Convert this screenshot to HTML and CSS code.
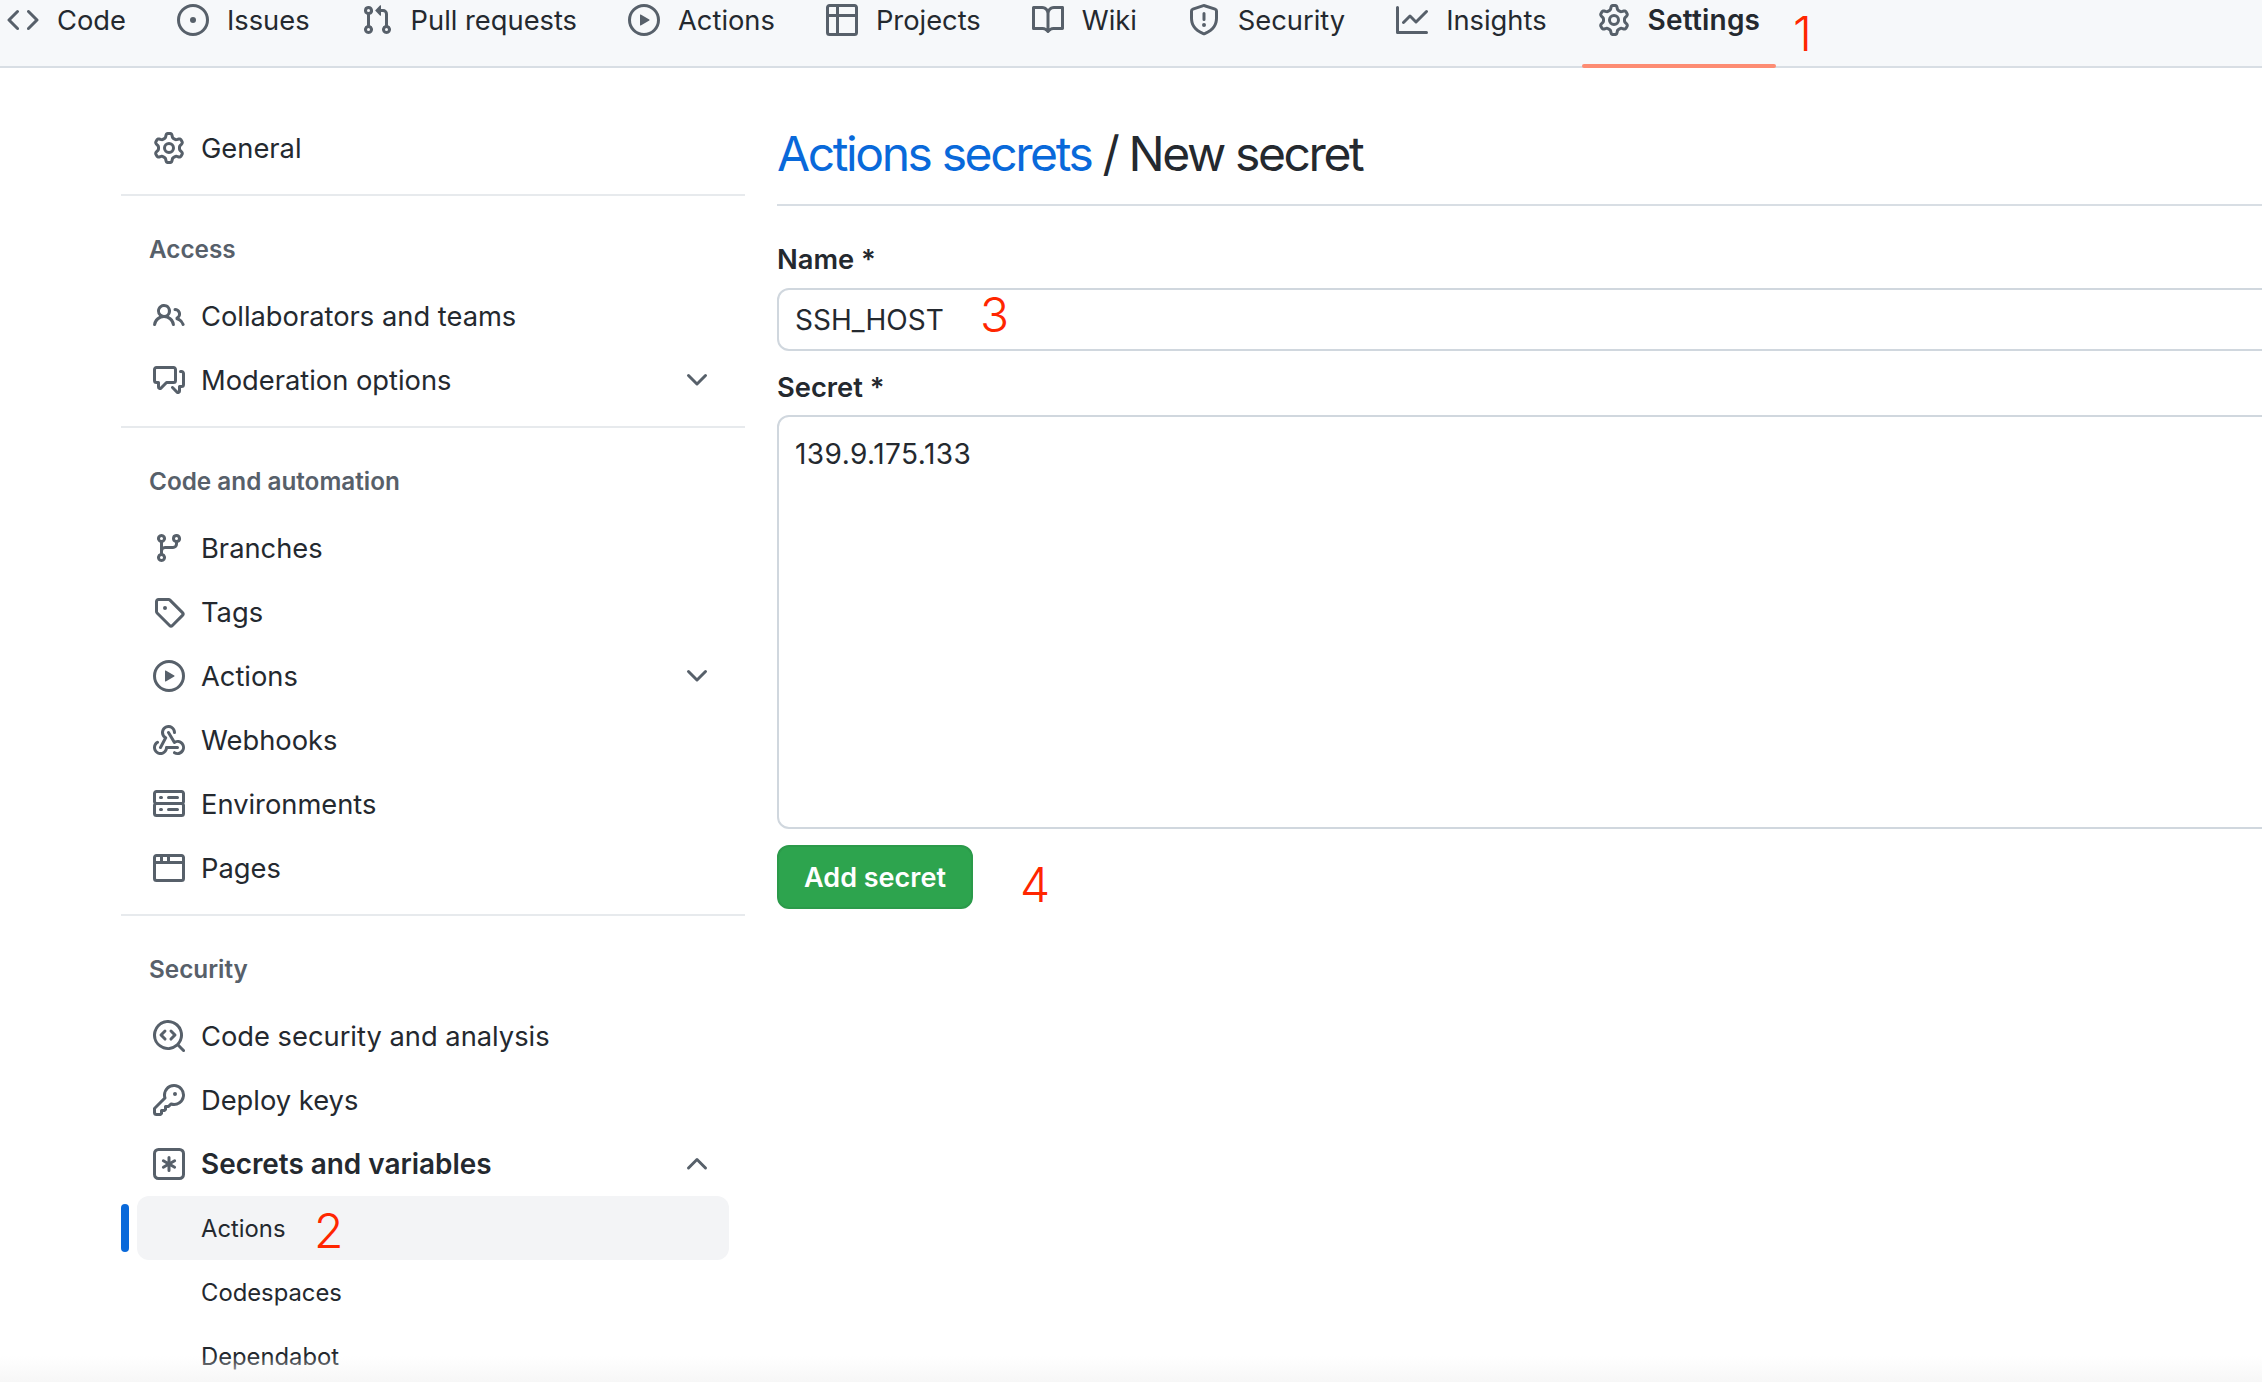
FILE: index.html
```html
<!DOCTYPE html>
<html lang="en">
<head>
<meta charset="utf-8">
<title>Actions secrets / New secret</title>
<link rel="stylesheet" href="styles.css">
</head>
<body>
<svg class="defs" xmlns="http://www.w3.org/2000/svg">
<symbol id="code" viewBox="0 0 16 16"><path d="m11.28 3.22 4.25 4.25a.75.75 0 0 1 0 1.06l-4.25 4.25a.749.749 0 0 1-1.275-.326.749.749 0 0 1 .215-.734L13.94 8l-3.72-3.72a.749.749 0 0 1 .326-1.275.749.749 0 0 1 .734.215Zm-6.56 0a.751.751 0 0 1 1.042.018.751.751 0 0 1 .018 1.042L2.06 8l3.72 3.72a.749.749 0 0 1-.326 1.275.749.749 0 0 1-.734-.215L.47 8.53a.75.75 0 0 1 0-1.06Z"/></symbol>
<symbol id="issue" viewBox="0 0 16 16"><path d="M8 9.5a1.5 1.5 0 1 0 0-3 1.5 1.5 0 0 0 0 3Z"/><path d="M8 0a8 8 0 1 1 0 16A8 8 0 0 1 8 0ZM1.5 8a6.5 6.5 0 1 0 13 0 6.5 6.5 0 0 0-13 0Z"/></symbol>
<symbol id="pr" viewBox="0 0 16 16"><path d="M1.5 3.25a2.25 2.25 0 1 1 3 2.122v5.256a2.251 2.251 0 1 1-1.5 0V5.372A2.25 2.25 0 0 1 1.5 3.25Zm5.677-.177L9.573.677A.25.25 0 0 1 10 .854V2.5h1A2.5 2.5 0 0 1 13.5 5v5.628a2.251 2.251 0 1 1-1.5 0V5a1 1 0 0 0-1-1h-1v1.646a.25.25 0 0 1-.427.177L7.177 3.427a.25.25 0 0 1 0-.354ZM3.75 2.5a.75.75 0 1 0 0 1.5.75.75 0 0 0 0-1.5Zm0 9.5a.75.75 0 1 0 0 1.5.75.75 0 0 0 0-1.5Zm8.25.75a.75.75 0 1 0 1.5 0 .75.75 0 0 0-1.5 0Z"/></symbol>
<symbol id="play" viewBox="0 0 16 16"><path d="M8 0a8 8 0 1 1 0 16A8 8 0 0 1 8 0ZM1.5 8a6.5 6.5 0 1 0 13 0 6.5 6.5 0 0 0-13 0Zm4.879-2.773 4.264 2.559a.25.25 0 0 1 0 .428l-4.264 2.559A.25.25 0 0 1 6 10.559V5.442a.25.25 0 0 1 .379-.215Z"/></symbol>
<symbol id="table" viewBox="0 0 16 16"><path d="M0 1.75C0 .784.784 0 1.75 0h12.5C15.216 0 16 .784 16 1.75v12.5A1.75 1.75 0 0 1 14.25 16H1.75A1.75 1.75 0 0 1 0 14.25ZM6.5 6.5v8h7.75a.25.25 0 0 0 .25-.25V6.5Zm8-1.5V1.75a.25.25 0 0 0-.25-.25H6.5V5Zm-13 1.5v7.75c0 .138.112.25.25.25H5v-8ZM5 5V1.5H1.75a.25.25 0 0 0-.25.25V5Z"/></symbol>
<symbol id="book" viewBox="0 0 16 16"><path d="M0 1.75A.75.75 0 0 1 .75 1h4.253c1.227 0 2.317.59 3 1.501A3.743 3.743 0 0 1 11.006 1h4.245a.75.75 0 0 1 .75.75v10.5a.75.75 0 0 1-.75.75h-4.507a2.25 2.25 0 0 0-1.591.659l-.622.621a.75.75 0 0 1-1.06 0l-.622-.621A2.25 2.25 0 0 0 5.258 13H.75a.75.75 0 0 1-.75-.75Zm7.251 10.324.004-5.073-.002-2.253A2.25 2.25 0 0 0 5.003 2.5H1.5v9h3.757a3.75 3.75 0 0 1 1.994.574ZM8.755 4.75l-.004 7.322a3.752 3.752 0 0 1 1.992-.572H14.5v-9h-3.495a2.25 2.25 0 0 0-2.25 2.25Z"/></symbol>
<symbol id="shield" viewBox="0 0 16 16"><path d="M7.467.133a1.748 1.748 0 0 1 1.066 0l5.25 1.68A1.75 1.75 0 0 1 15 3.48V7c0 1.566-.32 3.182-1.303 4.682-.983 1.498-2.585 2.813-5.032 3.855a1.697 1.697 0 0 1-1.33 0c-2.447-1.042-4.049-2.357-5.032-3.855C1.32 10.182 1 8.566 1 7V3.48a1.75 1.75 0 0 1 1.217-1.667Zm.61 1.429a.25.25 0 0 0-.153 0l-5.25 1.68a.25.25 0 0 0-.174.238V7c0 1.358.275 2.666 1.057 3.86.784 1.194 2.121 2.34 4.366 3.297a.196.196 0 0 0 .154 0c2.245-.956 3.582-2.104 4.366-3.298C13.225 9.666 13.5 8.36 13.5 7V3.48a.251.251 0 0 0-.174-.237l-5.25-1.68ZM8.75 4.75v3a.75.75 0 0 1-1.5 0v-3a.75.75 0 0 1 1.5 0ZM9 10.5a1 1 0 1 1-2 0 1 1 0 0 1 2 0Z"/></symbol>
<symbol id="graph" viewBox="0 0 16 16"><path d="M1.5 1.75V13.5h13.75a.75.75 0 0 1 0 1.5H.75a.75.75 0 0 1-.75-.75V1.75a.75.75 0 0 1 1.5 0Zm14.28 2.53-5.25 5.25a.75.75 0 0 1-1.06 0L7 7.06 4.28 9.78a.751.751 0 0 1-1.042-.018.751.751 0 0 1-.018-1.042l3.25-3.25a.75.75 0 0 1 1.06 0L10 7.94l4.72-4.72a.751.751 0 0 1 1.042.018.751.751 0 0 1 .018 1.042Z"/></symbol>
<symbol id="gear" viewBox="0 0 16 16"><path d="M8 0a8.2 8.2 0 0 1 .701.031C9.444.095 9.99.645 10.16 1.29l.288 1.107c.018.066.079.158.212.224.231.114.454.243.668.386.123.082.233.09.299.071l1.103-.303c.644-.176 1.392.021 1.82.63.27.385.506.792.704 1.218.315.675.111 1.422-.364 1.891l-.814.806c-.049.048-.098.147-.088.294.016.257.016.515 0 .772-.01.147.038.246.088.294l.814.806c.475.469.679 1.216.364 1.891a7.977 7.977 0 0 1-.704 1.217c-.428.61-1.176.807-1.82.63l-1.102-.302c-.067-.019-.177-.011-.3.071a5.909 5.909 0 0 1-.668.386c-.133.066-.194.158-.211.224l-.29 1.106c-.168.646-.715 1.196-1.458 1.26a8.006 8.006 0 0 1-1.402 0c-.743-.064-1.289-.614-1.458-1.26l-.289-1.106c-.018-.066-.079-.158-.212-.224a5.738 5.738 0 0 1-.668-.386c-.123-.082-.233-.09-.299-.071l-1.103.303c-.644.176-1.392-.021-1.82-.63a8.12 8.12 0 0 1-.704-1.218c-.315-.675-.111-1.422.363-1.891l.815-.806c.05-.048.098-.147.088-.294a6.214 6.214 0 0 1 0-.772c.01-.147-.038-.246-.088-.294l-.815-.806C.635 6.045.431 5.298.746 4.623a7.92 7.92 0 0 1 .704-1.217c.428-.61 1.176-.807 1.82-.63l1.102.302c.067.019.177.011.3-.071.214-.143.437-.272.668-.386.133-.066.194-.158.211-.224l.29-1.106C6.009.645 6.556.095 7.299.03 7.53.01 7.764 0 8 0Zm-.571 1.525c-.036.003-.108.036-.137.146l-.289 1.105c-.147.561-.549.967-.998 1.189-.173.086-.34.183-.5.29-.417.278-.97.423-1.529.27l-1.103-.303c-.109-.03-.175.016-.195.045-.22.312-.412.644-.573.99-.014.031-.021.11.059.19l.815.806c.411.406.562.957.53 1.456a4.709 4.709 0 0 0 0 .582c.032.499-.119 1.05-.53 1.456l-.815.806c-.081.08-.073.159-.059.19.162.346.353.677.573.989.02.03.085.076.195.046l1.102-.303c.56-.153 1.113-.008 1.53.27.161.107.328.204.501.29.447.222.85.629.997 1.189l.289 1.105c.029.109.101.143.137.146a6.6 6.6 0 0 0 1.142 0c.036-.003.108-.036.137-.146l.289-1.105c.147-.561.549-.967.998-1.189.173-.086.34-.183.5-.29.417-.278.97-.423 1.529-.27l1.103.303c.109.029.175-.016.195-.045.22-.313.411-.644.573-.99.014-.031.021-.11-.059-.19l-.815-.806c-.411-.406-.562-.957-.53-1.456a4.709 4.709 0 0 0 0-.582c-.032-.499.119-1.05.53-1.456l.815-.806c.081-.08.073-.159.059-.19a6.464 6.464 0 0 0-.573-.989c-.02-.03-.085-.076-.195-.046l-1.102.303c-.56.153-1.113.008-1.53-.27a4.44 4.44 0 0 0-.501-.29c-.447-.222-.85-.629-.997-1.189l-.289-1.105c-.029-.11-.101-.143-.137-.146a6.6 6.6 0 0 0-1.142 0ZM11 8a3 3 0 1 1-6 0 3 3 0 0 1 6 0ZM9.5 8a1.5 1.5 0 1 0-3.001.001A1.5 1.5 0 0 0 9.5 8Z"/></symbol>
<symbol id="people" viewBox="0 0 16 16"><path d="M2 5.5a3.5 3.5 0 1 1 5.898 2.549 5.508 5.508 0 0 1 3.034 4.084.75.75 0 1 1-1.482.235 4 4 0 0 0-7.9 0 .75.75 0 0 1-1.482-.236A5.507 5.507 0 0 1 3.102 8.05 3.493 3.493 0 0 1 2 5.5ZM11 4a3.001 3.001 0 0 1 2.22 5.018 5.01 5.01 0 0 1 2.56 3.012.749.749 0 0 1-.885.954.752.752 0 0 1-.549-.514 3.507 3.507 0 0 0-2.522-2.372.75.75 0 0 1-.574-.73v-.352a.75.75 0 0 1 .416-.672A1.5 1.5 0 0 0 11 5.5.75.75 0 0 1 11 4Zm-5.5-.5a2 2 0 1 0-.001 3.999A2 2 0 0 0 5.5 3.5Z"/></symbol>
<symbol id="discuss" viewBox="0 0 16 16"><path d="M1.75 1h8.5c.966 0 1.75.784 1.75 1.75v5.5A1.75 1.75 0 0 1 10.25 10H7.061l-2.574 2.573A1.458 1.458 0 0 1 2 11.543V10h-.25A1.75 1.75 0 0 1 0 8.25v-5.5C0 1.784.784 1 1.75 1ZM1.5 2.75v5.5c0 .138.112.25.25.25h1a.75.75 0 0 1 .75.75v2.19l2.72-2.72a.749.749 0 0 1 .53-.22h3.5a.25.25 0 0 0 .25-.25v-5.5a.25.25 0 0 0-.25-.25h-8.5a.25.25 0 0 0-.25.25Zm13 2a.25.25 0 0 0-.25-.25h-.5a.75.75 0 0 1 0-1.5h.5c.966 0 1.75.784 1.75 1.75v5.5A1.75 1.75 0 0 1 14.25 12H14v1.543a1.458 1.458 0 0 1-2.487 1.03L9.22 12.28a.749.749 0 0 1 .326-1.275.749.749 0 0 1 .734.215l2.22 2.22v-2.19a.75.75 0 0 1 .75-.75h1a.25.25 0 0 0 .25-.25Z"/></symbol>
<symbol id="branch" viewBox="0 0 16 16"><path d="M9.5 3.25a2.25 2.25 0 1 1 3 2.122V6A2.5 2.5 0 0 1 10 8.5H6a1 1 0 0 0-1 1v1.128a2.251 2.251 0 1 1-1.5 0V5.372a2.25 2.25 0 1 1 1.5 0v1.836A2.493 2.493 0 0 1 6 7h4a1 1 0 0 0 1-1v-.628A2.25 2.25 0 0 1 9.5 3.25Zm-6 0a.75.75 0 1 0 1.5 0 .75.75 0 0 0-1.5 0Zm8.25-.75a.75.75 0 1 0 0 1.5.75.75 0 0 0 0-1.5ZM4.25 12a.75.75 0 1 0 0 1.5.75.75 0 0 0 0-1.5Z"/></symbol>
<symbol id="tag" viewBox="0 0 16 16"><path d="M1 7.775V2.75C1 1.784 1.784 1 2.75 1h5.025c.464 0 .91.184 1.238.513l6.25 6.25a1.75 1.75 0 0 1 0 2.474l-5.026 5.026a1.75 1.75 0 0 1-2.474 0l-6.25-6.25A1.752 1.752 0 0 1 1 7.775Zm1.5 0c0 .066.026.13.073.177l6.25 6.25a.25.25 0 0 0 .354 0l5.025-5.025a.25.25 0 0 0 0-.354l-6.25-6.25a.25.25 0 0 0-.177-.073H2.75a.25.25 0 0 0-.25.25ZM6 5a1 1 0 1 1 0 2 1 1 0 0 1 0-2Z"/></symbol>
<symbol id="webhook" viewBox="0 0 16 16"><path d="M5.5 4.25a2.25 2.25 0 0 1 4.5 0 .75.75 0 0 0 1.5 0 3.75 3.75 0 1 0-6.14 2.889l-2.272 4.258a.75.75 0 0 0 1.324.706L7 7.25a.75.75 0 0 0-.309-1.015A2.25 2.25 0 0 1 5.5 4.25Z"/><path d="M7.364 3.607a.75.75 0 0 1 1.03.257l2.608 4.349a3.75 3.75 0 1 1-.628 6.785.75.75 0 0 1 .752-1.299 2.25 2.25 0 1 0-.033-3.88.75.75 0 0 1-1.03-.256L7.107 4.636a.75.75 0 0 1 .257-1.03Z"/><path d="M2.9 8.776A.75.75 0 0 1 2.625 9.8 2.25 2.25 0 1 0 6 11.75a.75.75 0 0 1 .75-.751h5.5a.75.75 0 0 1 0 1.5H7.425a3.751 3.751 0 1 1-5.55-3.998.75.75 0 0 1 1.024.274Z"/></symbol>
<symbol id="server" viewBox="0 0 16 16"><path d="M1.75 1h12.5c.966 0 1.75.784 1.75 1.75v4c0 .372-.116.717-.314 1 .198.283.314.628.314 1v4a1.75 1.75 0 0 1-1.75 1.75H1.75A1.75 1.75 0 0 1 0 12.75v-4c0-.358.109-.707.314-1a1.739 1.739 0 0 1-.314-1v-4C0 1.784.784 1 1.75 1ZM1.5 2.75v4c0 .138.112.25.25.25h12.5a.25.25 0 0 0 .25-.25v-4a.25.25 0 0 0-.25-.25H1.75a.25.25 0 0 0-.25.25Zm.25 5.75a.25.25 0 0 0-.25.25v4c0 .138.112.25.25.25h12.5a.25.25 0 0 0 .25-.25v-4a.25.25 0 0 0-.25-.25ZM7 4.75A.75.75 0 0 1 7.75 4h4.5a.75.75 0 0 1 0 1.5h-4.5A.75.75 0 0 1 7 4.75ZM7.75 10h4.5a.75.75 0 0 1 0 1.5h-4.5a.75.75 0 0 1 0-1.5ZM3 4.75A.75.75 0 0 1 3.75 4h.5a.75.75 0 0 1 0 1.5h-.5A.75.75 0 0 1 3 4.75ZM3.75 10h.5a.75.75 0 0 1 0 1.5h-.5a.75.75 0 0 1 0-1.5Z"/></symbol>
<symbol id="browser" viewBox="0 0 16 16"><path d="M0 2.75C0 1.784.784 1 1.75 1h12.5c.966 0 1.75.784 1.75 1.75v10.5A1.75 1.75 0 0 1 14.25 15H1.75A1.75 1.75 0 0 1 0 13.25ZM14.5 6h-13v7.25c0 .138.112.25.25.25h12.5a.25.25 0 0 0 .25-.25Zm-6-3.5v2H14.5V2.75a.25.25 0 0 0-.25-.25ZM5 2.5v2h2v-2Zm-3.25 0a.25.25 0 0 0-.25.25V4.5h2v-2Z"/></symbol>
<symbol id="codescan" viewBox="0 0 16 16"><path d="M8.47 4.97a.75.75 0 0 0 0 1.06L9.94 7.5 8.47 8.97a.75.75 0 1 0 1.06 1.06l2-2a.75.75 0 0 0 0-1.06l-2-2a.75.75 0 0 0-1.06 0ZM6.53 6.03a.75.75 0 0 0-1.06-1.06l-2 2a.75.75 0 0 0 0 1.06l2 2a.75.75 0 1 0 1.06-1.06L5.06 7.5l1.47-1.47Z"/><path d="M12.246 13.307a7.501 7.501 0 1 1 1.06-1.06l2.474 2.473a.749.749 0 0 1-.326 1.275.749.749 0 0 1-.734-.215ZM1.5 7.5a6.002 6.002 0 0 0 3.608 5.504 6.002 6.002 0 0 0 6.486-1.117.748.748 0 0 1 .292-.293A6 6 0 1 0 1.5 7.5Z"/></symbol>
<symbol id="key" viewBox="0 0 16 16"><path d="M10.5 0a5.499 5.499 0 1 1-1.288 10.848l-.932.932a.749.749 0 0 1-.53.22H7v.75a.749.749 0 0 1-.22.53l-.5.5a.749.749 0 0 1-.53.22H5v.75a.749.749 0 0 1-.22.53l-.5.5a.749.749 0 0 1-.53.22h-2A1.75 1.75 0 0 1 0 14.25v-2c0-.199.079-.389.22-.53l4.932-4.932A5.5 5.5 0 0 1 10.5 0Zm-4 5.5c-.001.431.069.86.205 1.269a.75.75 0 0 1-.181.768L1.5 12.56v1.69c0 .138.112.25.25.25h1.69l.06-.06v-1.19a.75.75 0 0 1 .75-.75h1.19l.06-.06v-1.19a.75.75 0 0 1 .75-.75h1.19l1.023-1.025a.75.75 0 0 1 .768-.18A4 4 0 1 0 6.5 5.5ZM11 6a1 1 0 1 1 0-2 1 1 0 0 1 0 2Z"/></symbol>
<symbol id="asterisk" viewBox="0 0 16 16"><path d="M0 2.75A2.75 2.75 0 0 1 2.75 0h10.5A2.75 2.75 0 0 1 16 2.75v10.5A2.75 2.75 0 0 1 13.25 16H2.75A2.75 2.75 0 0 1 0 13.25Zm2.75-1.25c-.69 0-1.25.56-1.25 1.25v10.5c0 .69.56 1.25 1.25 1.25h10.5c.69 0 1.25-.56 1.25-1.25V2.75c0-.69-.56-1.25-1.25-1.25ZM8 4a.75.75 0 0 1 .75.75V6.7l1.69-.975a.75.75 0 0 1 .75 1.3L9.5 8l1.69.976a.75.75 0 0 1-.75 1.298L8.75 9.3v1.951a.75.75 0 0 1-1.5 0V9.299l-1.69.976a.75.75 0 0 1-.75-1.3L6.5 8l-1.69-.975a.75.75 0 0 1 .75-1.3l1.69.976V4.75A.75.75 0 0 1 8 4Z"/></symbol>
<symbol id="chev-down" viewBox="0 0 16 16"><path d="M12.78 5.22a.749.749 0 0 1 0 1.06l-4.25 4.25a.749.749 0 0 1-1.06 0L3.22 6.28a.749.749 0 1 1 1.06-1.06L8 8.939l3.72-3.719a.749.749 0 0 1 1.06 0Z"/></symbol>
<symbol id="chev-up" viewBox="0 0 16 16"><path d="M3.22 10.53a.749.749 0 0 1 0-1.06l4.25-4.25a.749.749 0 0 1 1.06 0l4.25 4.25a.749.749 0 0 1-1.06 1.06L8 6.811 4.28 10.53a.749.749 0 0 1-1.06 0Z"/></symbol>
</svg>

<nav class="tabs">
  <a class="tab"><svg class="ic"><use href="#code"/></svg><span>Code</span></a>
  <a class="tab"><svg class="ic"><use href="#issue"/></svg><span>Issues</span></a>
  <a class="tab"><svg class="ic"><use href="#pr"/></svg><span>Pull requests</span></a>
  <a class="tab"><svg class="ic"><use href="#play"/></svg><span>Actions</span></a>
  <a class="tab"><svg class="ic"><use href="#table"/></svg><span>Projects</span></a>
  <a class="tab"><svg class="ic"><use href="#book"/></svg><span>Wiki</span></a>
  <a class="tab"><svg class="ic"><use href="#shield"/></svg><span>Security</span></a>
  <a class="tab"><svg class="ic"><use href="#graph"/></svg><span>Insights</span></a>
  <a class="tab tab-active"><svg class="ic"><use href="#gear"/></svg><span>Settings</span></a>
</nav>

<div class="layout">
  <aside class="sidebar">
    <section class="group group-first">
      <a class="row"><svg class="ic"><use href="#gear"/></svg><span>General</span></a>
    </section>
    <section class="group">
      <h2 class="group-title">Access</h2>
      <a class="row"><svg class="ic"><use href="#people"/></svg><span>Collaborators and teams</span></a>
      <a class="row"><svg class="ic"><use href="#discuss"/></svg><span>Moderation options</span><svg class="ic chev"><use href="#chev-down"/></svg></a>
    </section>
    <section class="group">
      <h2 class="group-title">Code and automation</h2>
      <a class="row"><svg class="ic"><use href="#branch"/></svg><span>Branches</span></a>
      <a class="row"><svg class="ic"><use href="#tag"/></svg><span>Tags</span></a>
      <a class="row"><svg class="ic"><use href="#play"/></svg><span>Actions</span><svg class="ic chev"><use href="#chev-down"/></svg></a>
      <a class="row"><svg class="ic"><use href="#webhook"/></svg><span>Webhooks</span></a>
      <a class="row"><svg class="ic"><use href="#server"/></svg><span>Environments</span></a>
      <a class="row"><svg class="ic"><use href="#browser"/></svg><span>Pages</span></a>
    </section>
    <section class="group group-last">
      <h2 class="group-title">Security</h2>
      <a class="row"><svg class="ic"><use href="#codescan"/></svg><span>Code security and analysis</span></a>
      <a class="row"><svg class="ic"><use href="#key"/></svg><span>Deploy keys</span></a>
      <a class="row row-strong"><svg class="ic"><use href="#asterisk"/></svg><span>Secrets and variables</span><svg class="ic chev"><use href="#chev-up"/></svg></a>
      <a class="row sub sub-active"><span>Actions</span></a>
      <a class="row sub"><span>Codespaces</span></a>
      <a class="row sub"><span>Dependabot</span></a>
    </section>
  </aside>

  <main class="content">
    <h1 class="title"><a class="title-link">Actions secrets</a> / New secret</h1>
    <form class="form">
      <label class="label label-name" for="name">Name *</label>
      <input class="field" id="name" type="text" value="SSH_HOST">
      <label class="label label-secret" for="secret">Secret *</label>
      <textarea class="field area" id="secret">139.9.175.133</textarea>
      <button class="submit" type="button">Add secret</button>
    </form>
  </main>
</div>

<span class="note note-1">1</span>
<span class="note note-2">2</span>
<span class="note note-3">3</span>
<span class="note note-4">4</span>
<div class="fade"></div>
</body>
</html>
```
FILE: styles.css
```css
* { box-sizing: border-box; }
html, body { margin: 0; height: 1382px; overflow: hidden; }
body {
  position: relative;
  background: #fff;
  color: #24292f;
  font-family: Inter, "Noto Sans", "Liberation Sans", sans-serif;
  font-size: 27.3px;
}
.defs { display: none; }
.ic { width: 32px; height: 32px; flex: none; fill: #57606a; }

.tabs {
  display: flex;
  gap: 19px;
  height: 68px;
  padding-left: 7px;
  background: #f6f8fa;
  border-bottom: 2px solid #d8dee4;
}
.tab {
  position: relative;
  display: flex;
  align-items: center;
  gap: 18px;
  height: 40px;
  padding: 0 16px;
  white-space: nowrap;
}
.tab:first-child { padding-left: 0; }
.tab-active { font-weight: 600; font-size: 28px; letter-spacing: .2px; }
.tab-active::after {
  content: "";
  position: absolute;
  left: 0;
  right: 0;
  top: 64px;
  height: 4px;
  border-radius: 2px;
  background: #fd8c73;
}

.layout { display: flex; padding-left: 121px; padding-top: 48px; gap: 32px; }
.sidebar { width: 624px; flex: none; }
.group { border-bottom: 2px solid #e7eaed; padding: 37px 0 14px; }
.group-first { padding-top: 0; }
.group-last { border-bottom: 0; }
.group-title {
  margin: 0 0 19px;
  padding-left: 28px;
  font-size: 24.3px;
  line-height: 32px;
  font-weight: 600;
  color: #57606a;
}
.row {
  display: flex;
  align-items: center;
  gap: 16px;
  height: 64px;
  margin: 0 16px;
  padding: 0 16px;
  white-space: nowrap;
}
.chev { margin-left: auto; }
.row-strong { font-weight: 600; font-size: 27.9px; }
.sub { font-size: 23.8px; padding-left: 64px; }
.sub-active { position: relative; background: #f3f4f6; border-radius: 12px; }
.sub-active::before {
  content: "";
  position: absolute;
  left: -16px;
  top: 8px;
  width: 8px;
  height: 48px;
  border-radius: 4px;
  background: #0969da;
}

.content { width: 1600px; flex: none; }
.title {
  margin: 0;
  height: 90px;
  line-height: 76px;
  font-size: 48px;
  font-weight: 400;
  letter-spacing: -2.4px;
  border-bottom: 2px solid #d8dee4;
}
.title-link { color: #0969da; }
.form { display: flex; flex-direction: column; align-items: flex-start; }
.label { display: block; font-weight: 600; line-height: 34px; }
.label-name { margin: 37px 0 11px; }
.label-secret { margin: 20px 0 10px; }
.field {
  display: block;
  width: 100%;
  height: 63px;
  padding: 0 16px;
  border: 2px solid #d0d7de;
  border-radius: 12px;
  background: #fff;
  color: #24292f;
  font: inherit;
  font-size: 28px;
  outline: none;
}
.area { height: 414px; padding: 17px 16px; resize: none; line-height: 40px; letter-spacing: .45px; }
.submit {
  margin-top: 16px;
  width: 196px;
  height: 64px;
  padding: 0;
  border: 2px solid #2b9a4a;
  border-radius: 12px;
  background: #2da44e;
  color: #fff;
  font: inherit;
  font-size: 27px;
  font-weight: 600;
}

.note {
  position: absolute;
  color: #ff2600;
  font-size: 48px;
  font-weight: 300;
  line-height: 48px;
}
.note-1 { left: 1793px; top: 10px; }
.note-2 { left: 314px; top: 1207px; }
.note-3 { left: 980px; top: 291px; }
.note-4 { left: 1020px; top: 861px; }
.fade {
  position: absolute;
  left: 0;
  right: 0;
  bottom: 0;
  height: 26px;
  background: linear-gradient(rgba(246,246,246,0), rgba(246,246,246,.9));
}
```
